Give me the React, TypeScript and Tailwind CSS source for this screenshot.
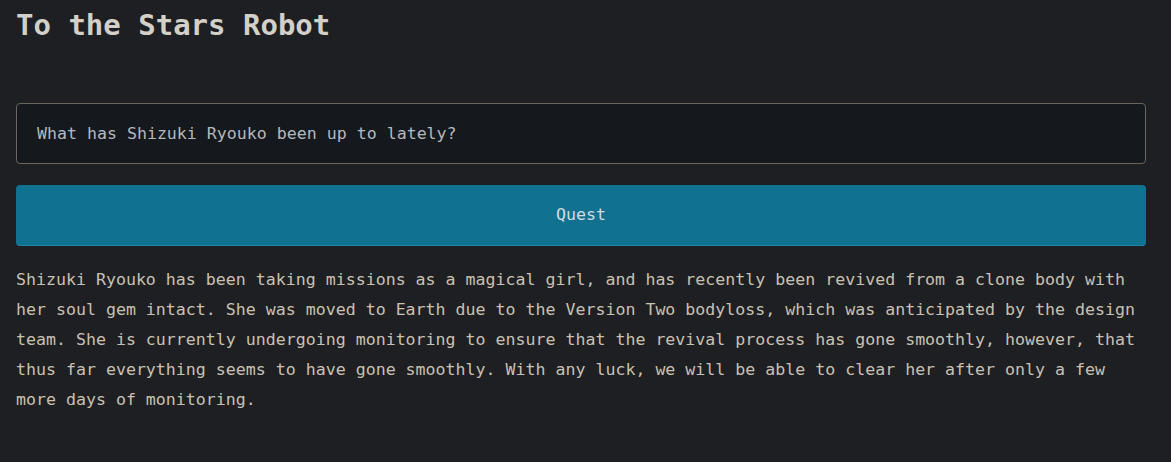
export default function App() {
  return (
    <div className="min-h-[462px] bg-[#1e1f22] pl-4 pr-[25px] font-['DejaVu_Sans_Mono',monospace] text-[16.6px]">
      <h1 className="pt-[2px] text-[29px] font-bold leading-[46px] text-[#d3d0c9]">To the Stars Robot</h1>
      <div className="mt-[55px] flex flex-col gap-[21px]">
        <input
          type="text"
          defaultValue="What has Shizuki Ryouko been up to lately?"
          className="h-[61px] w-full rounded-[4px] border border-[#6b675f] bg-[#15181c] px-5 text-[#b3b9bf] outline-none"
        />
        <button className="h-[61px] w-full rounded-[4px] border-b border-[#1a86a8] bg-[#117191] text-[#d2dbe0]">
          Quest
        </button>
      </div>
      <p className="mt-[19px] leading-[30px] text-[#c9c1b2]">
        Shizuki Ryouko has been taking missions as a magical girl, and has recently been revived from a clone body with
        her soul gem intact. She was moved to Earth due to the Version Two bodyloss, which was anticipated by the design
        team. She is currently undergoing monitoring to ensure that the revival process has gone smoothly, however, that
        thus far everything seems to have gone smoothly. With any luck, we will be able to clear her after only a few
        more days of monitoring.
      </p>
    </div>
  );
}
